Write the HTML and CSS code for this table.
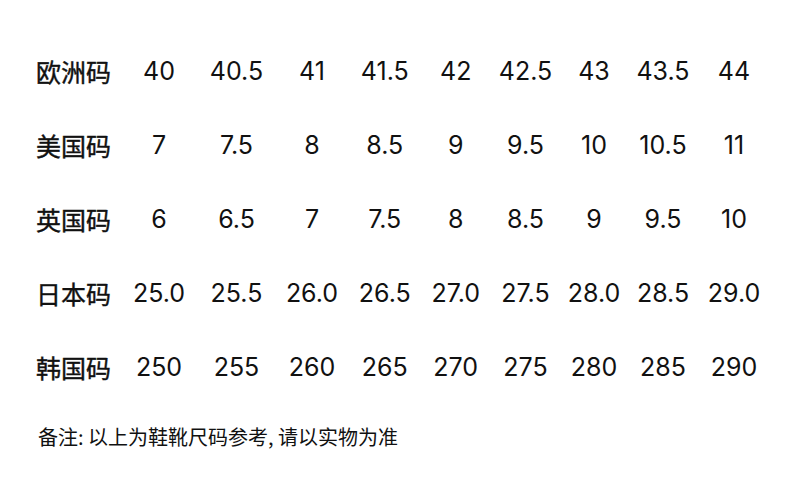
FILE: index.html
```html
<!DOCTYPE html>
<html lang="zh-CN">
<head>
<meta charset="utf-8">
<title>尺码表</title>
<link rel="stylesheet" href="styles.css">
</head>
<body>
<div class="page">
  <div class="size-table">
    <div class="label">欧洲码</div><div class="cell">40</div><div class="cell">40.5</div><div class="cell">41</div><div class="cell">41.5</div><div class="cell">42</div><div class="cell">42.5</div><div class="cell">43</div><div class="cell">43.5</div><div class="cell">44</div>
    <div class="label">美国码</div><div class="cell">7</div><div class="cell">7.5</div><div class="cell">8</div><div class="cell">8.5</div><div class="cell">9</div><div class="cell">9.5</div><div class="cell">10</div><div class="cell">10.5</div><div class="cell">11</div>
    <div class="label">英国码</div><div class="cell">6</div><div class="cell">6.5</div><div class="cell">7</div><div class="cell">7.5</div><div class="cell">8</div><div class="cell">8.5</div><div class="cell">9</div><div class="cell">9.5</div><div class="cell">10</div>
    <div class="label">日本码</div><div class="cell">25.0</div><div class="cell">25.5</div><div class="cell">26.0</div><div class="cell">26.5</div><div class="cell">27.0</div><div class="cell">27.5</div><div class="cell">28.0</div><div class="cell">28.5</div><div class="cell">29.0</div>
    <div class="label">韩国码</div><div class="cell">250</div><div class="cell">255</div><div class="cell">260</div><div class="cell">265</div><div class="cell">270</div><div class="cell">275</div><div class="cell">280</div><div class="cell">285</div><div class="cell">290</div>
  </div>
  <p class="note">备注: 以上为鞋靴尺码参考, 请以实物为准</p>
</div>
</body>
</html>
```
FILE: styles.css
```css
html, body {
  margin: 0;
  padding: 0;
  background: #ffffff;
}

.page {
  width: 790px;
  height: 492px;
  box-sizing: border-box;
  padding: 34px 0 0 36px;
  color: #111111;
  font-family: Inter, "Noto Sans CJK SC", sans-serif;
}

.size-table {
  display: grid;
  grid-template-columns: 84px 78px 77px 74px 71.5px 70.5px 69px 68px 70px 72px;
  grid-auto-rows: 74px;
  align-items: center;
}

.label {
  font-family: "Noto Sans CJK SC", sans-serif;
  font-size: 25px;
  font-weight: 400;
  line-height: 30px;
  -webkit-text-stroke: 0.4px #111111;
}

.cell {
  text-align: center;
  font-size: 25px;
  font-weight: 400;
  line-height: 30px;
}

.note {
  margin: 21px 0 0 2px;
  font-family: "Noto Sans CJK SC", sans-serif;
  font-size: 20px;
  line-height: 24px;
  color: #111111;
}
```
